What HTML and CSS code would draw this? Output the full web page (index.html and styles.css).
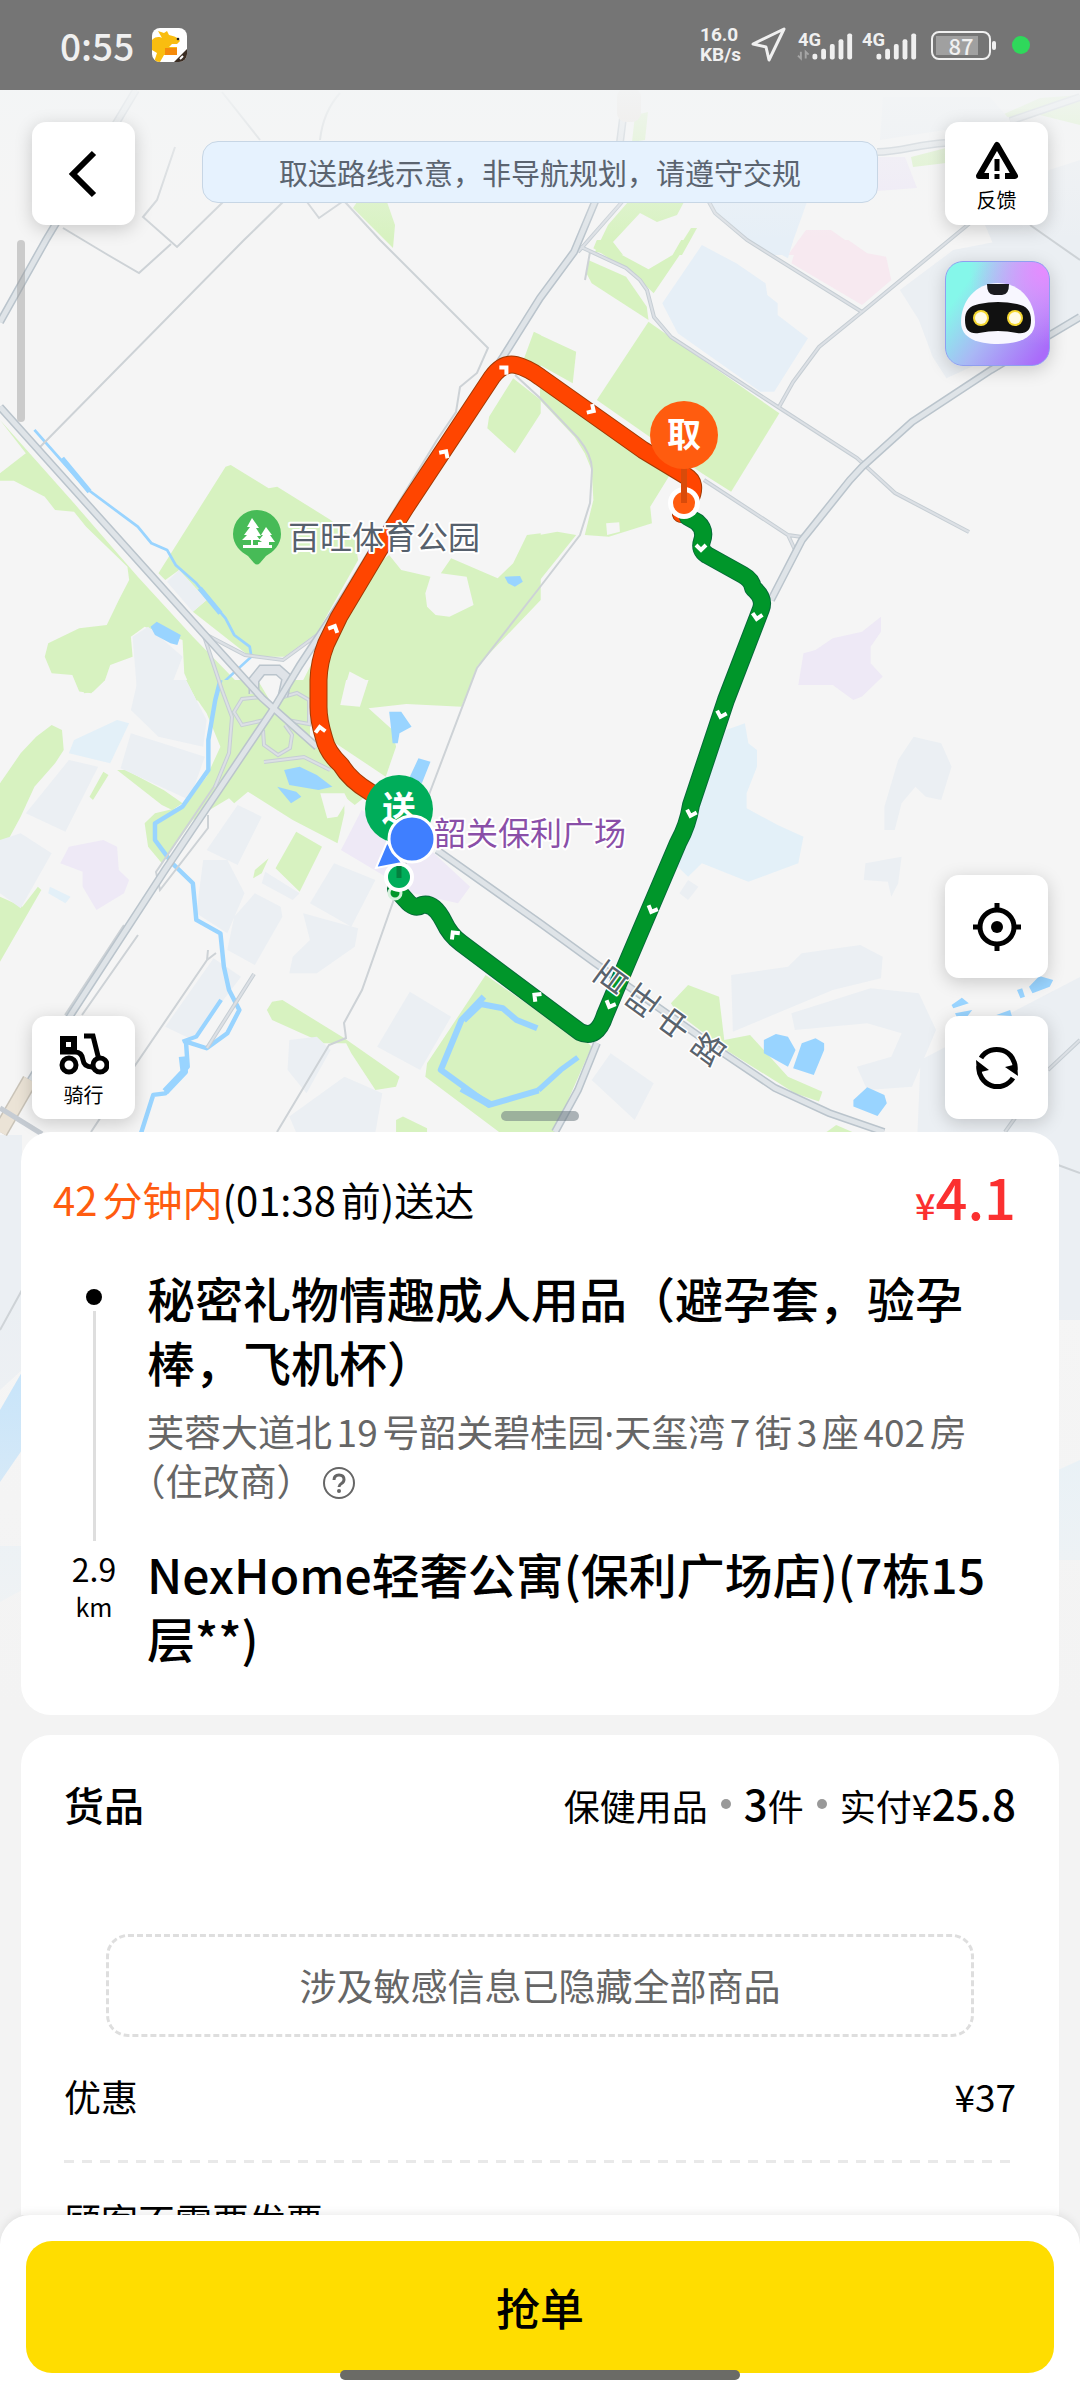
FILE: index.html
```html
<!DOCTYPE html>
<html lang="zh-CN">
<head>
<meta charset="utf-8">
<meta name="viewport" content="width=device-width, initial-scale=1">
<title>订单详情</title>
<link rel="stylesheet" href="styles.css">
</head>
<body>
<header class="status">
  <div class="status-side">
    <span class="clock">0:55</span>
    <svg class="app-badge" viewBox="0 0 35 34" aria-hidden="true">
      <defs><clipPath id="badge"><rect width="35" height="34" rx="8"/></clipPath></defs>
      <g clip-path="url(#badge)">
        <rect width="35" height="34" fill="#fff"/>
        <path d="M0 12C4 8 8 9 10 10L6 3L12 5L15 3L17 7C22 8 27 10 28 13L25 16L20 16L17 19H25V27H12L8 34H2L5 25L0 22Z" fill="#f9bd10"/>
        <rect x="13" y="20" width="12" height="7" fill="#f58a0b"/>
        <path d="M22 34L35 21V34Z" fill="#3a2c22"/>
        <circle cx="26" cy="11" r="1.3" fill="#222"/>
        <path d="M28 31L31 28" stroke="#fff" stroke-width="2"/>
      </g>
    </svg>
  </div>
  <div class="status-side status-right">
    <span class="speed"><span>16.0</span><span>KB/s</span></span>
    <svg class="nav-arrow" viewBox="0 0 36 36" aria-hidden="true"><path d="M33 2L18 33L15 20L2 17Z" fill="none" stroke="#f0f0f0" stroke-width="3" stroke-linejoin="round"/></svg>
    <svg class="signal" viewBox="0 0 60 34" aria-hidden="true">
      <text x="1" y="18">4G</text>
      <g fill="#f0f0f0"><rect x="16" y="26" width="5" height="6" rx="2"/><rect x="25" y="21" width="5" height="11" rx="2"/><rect x="34" y="16" width="5" height="16" rx="2"/><rect x="43" y="11" width="5" height="21" rx="2"/><rect x="52" y="5" width="5" height="27" rx="2"/></g>
      <path d="M4 24V31L1 28M9 31V24L12 27" fill="none" stroke="#a5a5a5" stroke-width="2"/>
    </svg>
    <svg class="signal" viewBox="0 0 60 34" aria-hidden="true">
      <text x="1" y="18">4G</text>
      <g fill="#f0f0f0"><rect x="16" y="26" width="5" height="6" rx="2"/><rect x="25" y="21" width="5" height="11" rx="2"/><rect x="34" y="16" width="5" height="16" rx="2"/><rect x="43" y="11" width="5" height="21" rx="2"/><rect x="52" y="5" width="5" height="27" rx="2"/></g>
    </svg>
    <span class="battery"><span class="battery-level">87</span></span>
    <span class="live-dot"></span>
  </div>
</header>

<main class="content">
  <svg class="map" viewBox="0 90 1080 1620" aria-hidden="true">
    <defs>
      <linearGradient id="topFade" x1="0" y1="0" x2="0" y2="1"><stop offset="0" stop-color="#f3f5f6" stop-opacity=".9"/><stop offset="1" stop-color="#f5f5f5" stop-opacity="0"/></linearGradient>
      <linearGradient id="endFade" x1="0" y1="0" x2="0" y2="1"><stop offset="0" stop-color="#f3f3f3" stop-opacity="0"/><stop offset="1" stop-color="#f3f3f3"/></linearGradient>
      <path id="chev" d="M-5 3L0 -2L5 3" fill="none" stroke="#fff" stroke-width="4"/>
      <g id="main-roads">
        <path d="M136 90L46 240 0 322"/>
        <path d="M0 407L203 633 262 698 317 747"/>
        <path d="M437 850L540 923 595 963 726 1055 775 1088 829 1113 884 1132"/>
        <path d="M623 118L620 142 574 252 540 298 503 357 300 665 274 708 165 870 72 1013 0 1130"/>
        <path d="M1080 317L991 370 912 422 862 467 850 480 802 540 771 600"/>
        <path d="M597 1043L578 1090 555 1132"/>
        <path d="M877 152C900 152 920 144 945 143M1010 121L1080 97"/>
      </g>
      <g id="side-roads">
        <path d="M581 247L626 268 640 280 647 290 654 317 671 337 778 407 857 458 895 493 969 532"/>
        <path d="M709 202L715 213 747 240 862 312 970 223M862 312L819 347 793 382 779 407"/>
        <path d="M704 480L788 535 795 550M788 535L802 537"/>
        <path d="M203 633L245 655 283 660 320 633"/>
        <path d="M203 633L222 690 232 717 229 753 215 787"/>
        <path d="M262 697L242 699 234 712 242 725 265 720M283 697L297 693 309 700 309 724 287 720"/>
        <path d="M263 730L264 745 278 755 290 748 292 735 285 725M264 762L304 757 330 770"/>
        <path d="M254 974L207 1048M1048 1070L1080 1040M1005 1132L1015 1118M578 252L622 202"/>
      </g>
    </defs>
    <rect y="90" width="1080" height="1620" fill="#f5f5f5"/>

    <!-- land use, north -->
    <g class="green">
      <path d="M357 202H387L395 225 393 248 353 208Z"/>
      <path d="M595 252L608 225 628 202H684L677 215 657 222 640 213 613 242 623 255Z"/>
      <path d="M691 228H697L682 255H674Z"/>
      <path d="M911 157L946 148V163L913 167ZM995 118L1040 98 1080 95V125L1040 115ZM635 115L648 112 645 140 632 142Z"/>
    </g>
    <path class="blue" d="M707 202H807L788 255H770L715 216Z"/>
    <path class="pink" d="M806 230H831L866 255H788Z"/>
    <path class="purple" d="M877 157H905L917 188 877 191Z"/>
    <path class="grey" d="M883 97H990L1010 120 880 140ZM1049 170L1080 160V260H1000L985 225Z"/>

    <g transform="translate(0 240) scale(.3444 .3333)">
      <g class="green">
        <path d="M460 1000L655 680 670 675 780 745 805 740 960 840 1030 900 1040 960 920 1180 820 1255 720 1245 560 1115 600 1080 520 990 480 1020Z"/>
        <path d="M1130 945L1165 990 1250 1010 1235 1060 1240 1100 1265 1125 1305 1130 1375 1095 1355 1010 1280 1000 1310 955 1445 1015 1490 970 1530 885 1570 880V1080L1385 1280 1350 1382H850L950 1180 1110 960Z"/>
        <path d="M0 540L75 640 0 700V722H40L130 770 160 810 215 815 250 860 370 980 375 1020 345 1080 310 1155 230 1165 140 1210 130 1250 150 1300 210 1305 230 1355 265 1360 305 1320 320 1275 385 1250 380 1190 420 1160 530 1200 535 1300 570 1382H740L560 1190 400 1010 215 790Z"/>
        <path d="M1550 275L1570 285V380L1520 360ZM1490 415L1570 480V520L1495 640 1415 565 1420 530Z"/>
      </g>
      <path class="grey" d="M385 1190L430 1160 530 1250 500 1330 530 1382H400ZM485 1025L520 990 600 1080 560 1115Z"/>
      <path fill="#f5f5f5" d="M1015 1295L1070 1325 1045 1382H990ZM640 1210L720 1250H830L920 1190 830 1370H740Z"/>
      <path class="water" d="M437 1160L455 1145 525 1185 515 1215 495 1210 450 1185ZM1465 1010L1510 1008 1518 1025 1495 1040 1475 1030Z"/>
      <path class="river" stroke-width="8" d="M100 570L250 745 400 860 440 910 485 930 510 975 570 1030 655 1135 680 1185 725 1220 730 1250 635 1340 625 1382"/>
      <path class="river" stroke-width="15" d="M180 655L260 755M580 1045L640 1120"/>
    </g>

    <g transform="translate(540 240) scale(.3444 .3333)">
      <g class="green">
        <path d="M0 285L105 335 95 430 0 375Z"/>
        <path d="M315 245L695 520 555 755 470 700 165 480Z"/>
        <path d="M135 100L140 60 250 110 310 200 315 240 150 130Z"/>
        <path d="M165 0H205L220 35 315 88 385 45 410 0H435L330 160 270 100 155 25Z"/>
        <path d="M0 480L100 590 130 640 150 690 155 780 130 885 200 890 325 850 320 800 380 700 100 500 0 440Z"/>
        <path d="M-2 885L50 875 105 885 0 1020Z"/>
      </g>
      <path fill="#f5f5f5" d="M192 850L230 847 232 875 195 885Z"/>
      <path class="blue" d="M470 15L570 70 655 130 660 165 690 190V225L778 295 680 455H640L400 280 355 190ZM625 0H735L720 55Z"/>
      <path class="pink" d="M750 0H895L950 40 1005 50 1020 120 935 195 730 70Z"/>
      <path class="grey" d="M1045 150L1200 30 1350 0H1570V230L1180 415 1140 350 1100 240Z"/>
      <path class="purple" d="M750 1335L765 1240 800 1230 850 1195 935 1175 990 1130V1175L960 1220V1270L995 1310 935 1370 910 1380 850 1335Z"/>
    </g>

    <g transform="translate(0 680) scale(.3444 .3333)">
      <g class="green">
        <path d="M220 0H305L270 35 245 40ZM105 170L150 135 180 150 185 210 160 250 100 320 60 410 0 525V310L60 220Z"/>
        <path d="M540 0H900V170L960 260 1060 350 1030 375 1000 350V400L980 490 850 420 720 335 680 370 665 355 560 420 470 550 430 500 420 430 450 400 530 380 600 290 640 200 620 150 600 100 560 40Z"/>
        <path d="M940 0H1370L1340 80 1180 72 1070 85 1140 150 1150 200 1120 290 960 180Z"/>
        <path d="M340 270H365L475 330 530 370 500 390 470 375ZM300 275L315 285 270 360 260 350Z"/>
        <path d="M0 650L65 680 110 620 120 630 0 845ZM860 455L935 500 870 635 800 565ZM780 535L760 580 735 595 740 570Z"/>
        <path d="M775 990L790 965 820 960 1000 1075 1160 1190 1150 1220 1090 1230 1020 1120 1005 1090 940 1090 790 1020Z"/>
        <path d="M1150 1320L1170 1310 1240 1345V1358H1150ZM1410 885L1570 1000V1380H1480L1235 1190 1240 1150Z"/>
      </g>
      <path fill="#f5f5f5" d="M1005 0H1070L1045 80 988 75ZM930 340L1000 340 1010 360 980 410 950 415ZM745 -5H830L800 90Z"/>
      <path class="grey" d="M200 240L285 260 190 455 75 400ZM380 160L595 230 550 360 350 265ZM400 0H540L600 120 590 200 460 170 380 90ZM60 460L150 520 60 685 0 640V480ZM690 375L760 410 690 555 600 510ZM590 540L660 540 710 640 660 760 570 700ZM740 640L815 680 820 710 740 855 660 810 680 710ZM970 550L1090 600 1020 740 900 670ZM770 575L870 640 850 660 760 610ZM880 700L1040 745 1030 800 920 880H840L850 830 900 780ZM1190 935L1310 1010 1220 1170 1095 1100ZM620 835L700 890 560 1080 480 1040ZM840 1080L920 1070 960 1110 890 1240 835 1170ZM1000 1190L1110 1240 1090 1358H860L840 1310Z"/>
      <path class="purple" d="M200 500L300 480 340 500 345 570 375 600 360 640 280 690 240 620 240 575 175 550ZM1050 390L1250 510 1365 620 1330 670 1200 640 990 510Z"/>
      <path class="pool" d="M340 120L375 130 320 250 200 220 215 180ZM145 620L205 650 190 670 140 640Z"/>
      <path class="water" d="M825 270L870 260 920 285 965 320 925 330 840 315ZM805 320L860 335 875 350 845 370ZM1130 95H1165L1195 140 1160 160 1155 190H1140L1135 140ZM1215 235L1250 245 1225 310 1190 290Z"/>
      <path class="river" stroke-width="13" d="M640 0L625 60 605 180V270L530 380 450 430V480L500 550 560 610 570 720 640 760 650 860 665 930 695 990 660 1060 600 1105 540 1085 545 1160 480 1240 445 1245 410 1358"/>
      <path class="river" stroke-width="12" d="M530 1085L570 1070 642 960"/>
      <path class="river" stroke-width="18" d="M1405 950L1340 1020 1280 1170 1420 1275 1570 1230M1385 970L1460 985 1500 1020 1560 1045"/>
      <path class="river" stroke-width="22" d="M1395 970L1345 1020M1340 1225L1425 1275M530 1130L535 1175 480 1235"/>
    </g>

    <g transform="translate(540 680) scale(.3444 .3333)">
      <path class="green" d="M-2 935L150 1100 40 1358H-2ZM380 970L430 915 520 950 535 1080 610 1065 720 1190 820 1235 810 1265 740 1240 540 1110 400 1000ZM830 1358L860 1335 910 1358Z"/>
      <path class="river" stroke-width="16" d="M-4 1230L60 1170 110 1132"/>
      <path class="pool" d="M595 130L605 190 630 210V260L600 340V385L690 435 765 470 750 550 605 605 470 550 430 590 400 560 540 150Z"/>
      <path class="grey" d="M1085 170L1165 190 1195 260 1165 360 1120 350 1090 320 1050 370 1030 450H1000V380L1040 240ZM945 550L1050 530 1040 610 1020 650 1010 605 940 600ZM555 885L720 860 760 820 930 795 995 830 990 895 850 930 560 1055ZM730 1000L960 925 1100 940 1150 1050 1080 1220 950 1230 920 1160 1020 1130 1050 1060 950 1030 740 1050ZM205 1120L330 1210 275 1320 150 1200ZM1105 1140L1570 890V1500H1090ZM430 600L460 620 430 660 405 640Z"/>
      <path class="water" d="M650 1080L685 1062 720 1070 742 1110 720 1160 650 1120ZM760 1090L800 1075 825 1090V1110L795 1185 735 1165ZM910 1260L950 1222 1000 1245 1007 1270 980 1308 910 1280ZM1195 975L1225 953 1245 970 1200 985ZM1205 1000L1255 990 1240 1010H1210ZM1385 930L1400 925 1408 950 1395 955ZM1420 920L1450 888 1490 900 1480 920 1430 940ZM1325 1005L1365 990 1370 1008Z"/>
    </g>
    <path class="grey" d="M0 1135H22V1370L0 1390ZM1058 1132H1080V1320H1058Z"/>
    <path class="water" opacity=".6" d="M0 1410L22 1372V1450L0 1482Z"/>
    <path class="pool" d="M0 1546H22V1590L0 1602ZM1058 1470L1080 1460V1560H1058Z"/>

    <!-- roads -->
    <g class="lane">
      <path d="M283 202L244 240 40 447M345 202L380 240 488 348 477 373 460 387 456 412 437 440 386 523 320 630"/>
      <path d="M63 228L108 255 139 273 171 244M175 147L157 200 143 217 177 247 223 202M307 202L319 218 342 202M222 92L260 140M340 93Q323 112 320 140"/>
      <path d="M515 375L540 398 578 438Q592 455 592 470L590 503 580 535 540 587 477 668 430 792 393 902 362 990 344 1023 346 1038 329 1045 277 1132"/>
      <path d="M208 815V828L160 890 156 872 215 785M124 925L65 1015M138 935L82 1015M208 950L207 960 134 1067 91 1132M207 960L216 953"/>
      <path d="M1058 1165L1080 1173M1030 225L1080 260M0 1330L22 1290M585 280L590 252"/>
    </g>
    <use href="#side-roads" class="road-edge side"/>
    <use href="#side-roads" class="road-fill side"/>
    <path class="loop-edge" d="M254 694V680L262 670H278L287 678 283 696"/>
    <path class="loop-fill" d="M254 694V680L262 670H278L287 678 283 696"/>
    <use href="#main-roads" class="road-edge"/>
    <use href="#main-roads" class="road-fill"/>
    <path d="M30 1080L0 1132" stroke="#c9c3b8" stroke-width="16"/><path d="M30 1080L0 1132" stroke="#ebe3d6" stroke-width="13"/>
    <path d="M0 1108L42 1134" stroke="#c6ccd3" stroke-width="5"/>
    <rect x="617" y="88" width="24" height="34" rx="9" fill="#e9e2dc"/>

    <rect y="90" width="1080" height="150" fill="url(#topFade)"/>
    <rect y="1300" width="1080" height="410" fill="url(#endFade)"/>

    <!-- delivery routes -->
    <g fill="none" stroke-linecap="round" stroke-linejoin="round">
      <path stroke="#a03a04" stroke-width="18" d="M400 812L370 792Q350 780 341 765 327 752 324 738 318.500 720 318.500 707V680Q319 662 326 644L339 617 379 550 406 507 492 377Q503 362 516 365 528 368 540 377L643 450 686 476Q698 483 690 500L681 514"/>
      <path stroke="#ff4500" stroke-width="16" d="M400 812L370 792Q350 780 341 765 327 752 324 738 318.500 720 318.500 707V680Q319 662 326 644L339 617 379 550 406 507 492 377Q503 362 516 365 528 368 540 377L643 450 686 476Q698 483 690 500L681 514"/>
      <path stroke="#056a38" stroke-width="18" d="M688 517L697 522Q706 530 702 541 699 550 707 555L743 575Q752 580 753 588 765 598 761 609L726 700 691 805Q688 825 678 843L626 965 605 1015Q597 1040 580 1032L461 943Q450 935 444 922 434 902 422 905 414 910 406 900L396 889"/>
      <path stroke="#00962a" stroke-width="16" d="M688 517L697 522Q706 530 702 541 699 550 707 555L743 575Q752 580 753 588 765 598 761 609L726 700 691 805Q688 825 678 843L626 965 605 1015Q597 1040 580 1032L461 943Q450 935 444 922 434 902 422 905 414 910 406 900L396 889"/>
    </g>
    <use href="#chev" transform="translate(505 369) rotate(45)"/>
    <use href="#chev" transform="translate(445 453) rotate(33)"/>
    <use href="#chev" transform="translate(334 628) rotate(25)"/>
    <use href="#chev" transform="translate(320 729) rotate(-8)"/>
    <use href="#chev" transform="translate(592 410) rotate(122)"/>
    <use href="#chev" transform="translate(701 548) rotate(180)"/>
    <use href="#chev" transform="translate(757 617) rotate(190)"/>
    <use href="#chev" transform="translate(721 715) rotate(197)"/>
    <use href="#chev" transform="translate(691 814) rotate(197)"/>
    <use href="#chev" transform="translate(652 910) rotate(203)"/>
    <use href="#chev" transform="translate(610 1005) rotate(203)"/>
    <use href="#chev" transform="translate(536 996) rotate(-52)"/>
    <use href="#chev" transform="translate(454 934) rotate(-38)"/>

    <!-- places -->
    <path d="M257 510a24 24 0 0 1 24 24c0 11-8 18-15 22l-6 7q-3 3-6 0l-6-7c-7-4-15-11-15-22a24 24 0 0 1 24-24Z" fill="#47bb57"/>
    <path d="M252 518l7 10h-3l5 8h-4l3 4h-7v5h5v-3h4l-3-2 4-5h-2l5-8 6 8h-2l5 7h-6v3h3v3h-29v-3h8v-5h-9l5-5h-3l6-8h-3Z" fill="#fff"/>
    <text class="place" x="288" y="549" fill="#56606c">百旺体育公园</text>
    <text class="place" x="434" y="845" fill="#8a4fa8">韶关保利广场</text>
    <g transform="translate(611 978) rotate(-54)"><text class="place street" x="0 0 0 0" y="12 51 90 132" fill="#59636d">百旺中路</text></g>

    <circle cx="684" cy="503" r="16" fill="#fff"/><circle cx="684" cy="503" r="11" fill="#ff5c0f"/>
    <path d="M684 465V503" stroke="#d94b0a" stroke-width="6"/>
    <circle cx="684" cy="435" r="34" fill="#ff5c0f"/>
    <text class="pin-text" x="684" y="447">取</text>
    <circle cx="395" cy="893" r="6" fill="none" stroke="#d4f0dc" stroke-width="3"/>
    <circle cx="399" cy="877" r="15" fill="#fff"/><circle cx="399" cy="877" r="11" fill="#00ad5a"/>
    <path d="M399 866V878" stroke="#04803f" stroke-width="5"/>
    <circle cx="399" cy="809" r="34" fill="#00ad5a"/>
    <text class="pin-text" x="399" y="821">送</text>
    <path d="M376 868L387 842 402 863Z" fill="#3f7fff" stroke="#fff" stroke-width="2"/>
    <circle cx="412" cy="839" r="23" fill="#3f7fff" stroke="#fff" stroke-width="3"/>
    <rect x="17" y="240" width="8" height="182" rx="4" fill="#999" fill-opacity=".45"/>
    <rect x="501" y="1111" width="78" height="10" rx="5" fill="#627078" fill-opacity=".5"/>
  </svg>

  <section class="map-controls" aria-label="地图">
    <div class="control-column">
      <button class="tile" aria-label="返回"><svg width="34" height="50" viewBox="0 0 34 50" aria-hidden="true"><path d="M27 4L6 25L27 46" fill="none" stroke="#000" stroke-width="6"/></svg></button>
      <button class="tile labelled"><svg width="50" height="42" viewBox="0 0 50 42" aria-hidden="true"><path d="M4 6H15V17H4Z" fill="none" stroke="#000" stroke-width="6"/><circle cx="10" cy="32" r="7" fill="none" stroke="#000" stroke-width="5"/><circle cx="41" cy="32" r="7" fill="none" stroke="#000" stroke-width="5"/><path d="M1 19H16Q23 19 24 27Q25 34 33 34M25 3H34L40 27" fill="none" stroke="#000" stroke-width="5"/></svg><span>骑行</span></button>
    </div>
    <p class="notice">取送路线示意，非导航规划，请遵守交规</p>
    <div class="control-column">
      <button class="tile labelled"><svg width="46" height="40" viewBox="0 0 46 40" aria-hidden="true"><path d="M15 36H5L23 5L41 36H31" fill="none" stroke="#000" stroke-width="6" stroke-linejoin="round"/><path d="M23 19V31M23 34V39" stroke="#000" stroke-width="5"/></svg><span>反馈</span></button>
      <button class="tile robot" aria-label="智能助手"><svg width="78" height="64" viewBox="0 0 78 64" aria-hidden="true"><path d="M39 1C62 1 76 20 76 40C76 56 60 62 39 62S2 56 2 40C2 20 16 1 39 1Z" fill="#f8f7ff"/><path d="M28 2H50Q50 13 43 13H35Q28 13 28 2Z" fill="#1b1b1f"/><path d="M20 22Q39 18 58 22C68 24 72 29 72 38C72 49 67 52 58 51Q39 47 20 51C11 52 6 49 6 38C6 29 10 24 20 22Z" fill="#111"/><circle cx="22" cy="36" r="8" fill="#f6d832"/><circle cx="22" cy="36" r="6" fill="#fffbe6"/><circle cx="56" cy="36" r="8" fill="#f6d832"/><circle cx="56" cy="36" r="6" fill="#fffbe6"/></svg></button>
      <button class="tile locate" aria-label="定位"><svg width="48" height="48" viewBox="0 0 48 48" aria-hidden="true"><circle cx="24" cy="24" r="17" fill="none" stroke="#000" stroke-width="5"/><circle cx="24" cy="24" r="6" fill="#000"/><path d="M24 0V8M24 40V48M0 24H8M40 24H48" stroke="#000" stroke-width="5"/></svg></button>
      <button class="tile" aria-label="刷新"><svg width="44" height="44" viewBox="0 0 44 44" aria-hidden="true"><path d="M6 12A18.500 18.500 0 0 1 40 24M38 32A18.500 18.500 0 0 1 4 20" fill="none" stroke="#000" stroke-width="5"/><path d="M43 30L30 21 42 18ZM1 14L14 24 2 27Z" fill="#000"/></svg></button>
    </div>
  </section>

  <section class="card route-card">
    <div class="summary">
      <h1 class="deadline"><em>42分钟内</em>(01:38前)送达</h1>
      <strong class="price"><small>¥</small>4.1</strong>
    </div>
    <div class="stops">
      <div class="rail"><span class="rail-dot"></span><span class="rail-line"></span></div>
      <div class="stop">
        <h2>秘密礼物情趣成人用品（避孕套，验孕棒，飞机杯）</h2>
        <p>芙蓉大道北19号韶关碧桂园<span class="middot">·</span>天玺湾7街3座402房（住改商）<button class="help" aria-label="地址说明"><svg width="34" height="34" viewBox="0 0 34 34" aria-hidden="true"><circle cx="17" cy="17" r="15" fill="none" stroke="#666" stroke-width="2"/><path d="M12 14Q12 9 17 9T22 13.500Q22 16 19.500 17.500T17 21" fill="none" stroke="#666" stroke-width="3"/><circle cx="17" cy="25" r="2" fill="#666"/></svg></button></p>
      </div>
      <div class="distance">2.9<small>km</small></div>
      <div class="stop">
        <h2>NexHome轻奢公寓(保利广场店)(7栋15层**)</h2>
      </div>
    </div>
  </section>

  <section class="card goods-card">
    <div class="row">
      <h3>货品</h3>
      <p class="totals">保健用品<i></i><b>3</b>件<i></i>实付¥<b>25.8</b></p>
    </div>
    <p class="hidden-goods">涉及敏感信息已隐藏全部商品</p>
    <div class="row discount"><span>优惠</span><span>¥37</span></div>
    <svg class="divider" width="100%" height="3" aria-hidden="true"><path d="M0 1.500H2000" stroke="#e9e9e9" stroke-width="3" stroke-dasharray="10 8"/></svg>
    <p class="invoice">顾客不需要发票</p>
  </section>
</main>

<footer class="action-bar">
  <button class="grab">抢单</button>
  <span class="home-bar"></span>
</footer>
</body>
</html>
```
FILE: styles.css
```css
* { box-sizing: border-box; }
html, body { height: 100%; }
body {
  margin: 0;
  display: flex;
  flex-direction: column;
  background: #f3f3f3;
  color: #000;
  font-family: "Noto Sans CJK SC", "Noto Sans", sans-serif;
}
h1, h2, h3, p { margin: 0; font-weight: 400; }
button { border: 0; padding: 0; font: inherit; color: inherit; cursor: pointer; }
svg { display: block; }

/* Status bar */
.status {
  flex: none;
  height: 90px;
  padding: 0 50px 0 60px;
  display: flex;
  justify-content: space-between;
  align-items: center;
  background: #757575;
  color: #f0f0f0;
}
.status-side { display: flex; align-items: center; gap: 18px; }
.status-right { gap: 6px; }
.clock { font: 500 37px/48px "Noto Sans CJK SC", sans-serif; }
.app-badge { width: 35px; height: 34px; }
.speed { display: flex; flex-direction: column; font: 700 19px/20px Roboto, sans-serif; white-space: nowrap; }
.nav-arrow { width: 36px; height: 36px; margin: 0 4px; }
.signal { width: 58px; height: 34px; overflow: visible; }
.signal text { font: 700 19px Roboto, sans-serif; fill: #f0f0f0; }
.battery {
  position: relative;
  width: 60px;
  height: 29px;
  margin: 0 15px 0 6px;
  padding: 3px;
  border: 2px solid #f0f0f0;
  border-radius: 8px;
}
.battery::after {
  content: "";
  position: absolute;
  right: -7px;
  top: 8px;
  width: 4px;
  height: 9px;
  border-radius: 2px;
  background: #f0f0f0;
}
.battery-level {
  display: block;
  background: linear-gradient(90deg, #a0a0a0 84%, transparent 84%);
  font-size: 22px;
  font-weight: 500;
  line-height: 19px;
  text-align: center;
}
.live-dot { width: 18px; height: 18px; border-radius: 50%; background: #2fd85b; }

.content { position: relative; flex: 1; min-height: 0; overflow: hidden; }
.map { position: absolute; top: 0; left: 0; width: 100%; height: auto; }
.green { fill: #d7f2c0; }
.water { fill: #99d4ff; }
.pool { fill: #e3f0f8; }
.grey { fill: #ebeff3; }
.blue { fill: #e6eff7; }
.pink { fill: #f7e9f0; }
.purple { fill: #eee9f6; }
.river { fill: none; stroke: #99d4ff; stroke-linejoin: round; }
.lane { fill: none; stroke: #cdd2d6; stroke-width: 2; }
.road-edge { fill: none; stroke: #bac4cc; stroke-width: 8; }
.road-fill { fill: none; stroke: #dfe4e8; stroke-width: 5; }
.road-edge.side { stroke: #c6ced4; stroke-width: 4; }
.road-fill.side { stroke: #dce0e5; stroke-width: 2; }
.loop-edge { fill: none; stroke: #bac4cc; stroke-width: 11; }
.loop-fill { fill: none; stroke: #dfe3e8; stroke-width: 8; }
.place { font-size: 32px; paint-order: stroke; stroke: #fff; stroke-width: 4px; stroke-linejoin: round; }
.street { text-anchor: middle; stroke-width: 3px; }
.pin-text { font-size: 34px; font-weight: 700; text-anchor: middle; fill: #fff; }

.map-controls {
  position: relative;
  min-height: 1042px;
  padding: 32px 31px 13px 32px;
  display: flex;
  justify-content: space-between;
}
.control-column { display: flex; flex-direction: column; justify-content: space-between; }
.tile {
  display: flex;
  flex-direction: column;
  align-items: center;
  justify-content: center;
  width: 103px;
  height: 103px;
  border-radius: 14px;
  background: #fff;
  box-shadow: 0 4px 18px rgb(0 0 0 / 18%);
  font-size: 20px;
  line-height: 28px;
}
.tile.labelled { gap: 6px; padding-top: 6px; }
.tile.robot {
  width: 105px;
  height: 105px;
  margin: 36px -1px auto 0;
  border: 1px solid #8f9ff0;
  border-radius: 18px;
  background: radial-gradient(circle at 95% 8%, #e58cff, transparent 55%), linear-gradient(125deg, #85f7ea 20%, #a9b8f5 52%, #aa6bfa 92%);
}
.tile.locate { margin-bottom: 38px; }
.notice {
  align-self: flex-start;
  width: 676px;
  margin-top: 19px;
  border: 1px solid #c7d6e5;
  border-radius: 16px;
  background: #e6f2fe;
  color: #5b6470;
  font-size: 29px;
  line-height: 60px;
  text-align: center;
}

/* Cards */
.card { position: relative; margin: 0 21px 20px; border-radius: 30px; background: #fff; }
.route-card { padding: 37px 43px 46px 32px; }
.summary { display: flex; justify-content: space-between; align-items: center; margin-bottom: 36px; line-height: 60px; }
.deadline { font-size: 40px; text-autospace: normal; }
.deadline em { font-style: normal; color: #ff5c0f; }
.price { height: 60px; margin-top: -6px; font-size: 56px; font-weight: 500; color: #fb3030; }
.price small { font-size: 36px; line-height: 1; }
.stops { display: grid; grid-template-columns: 82px 1fr; column-gap: 12px; row-gap: 36px; }
.rail { display: flex; flex-direction: column; align-items: center; gap: 6px; padding-top: 24px; }
.rail-dot { width: 16px; height: 16px; border-radius: 50%; background: #000; }
.rail-line { width: 3px; flex: 1; margin-bottom: -36px; background: #dedede; }
.stop { max-width: 840px; }
.stop h2 { font-size: 48px; font-weight: 500; line-height: 64px; }
.stop p { margin-top: 14px; color: #666; font-size: 37px; line-height: 49px; text-autospace: normal; text-spacing-trim: trim-start; }
.middot { font-family: "Noto Sans", sans-serif; line-height: 1; }
.help { width: 34px; height: 34px; margin-left: 8px; background: none; vertical-align: -4px; }
.distance { padding-top: 8px; font-size: 32px; line-height: 38px; text-align: center; }
.distance small { display: block; font-size: 25px; }

.goods-card { padding: 39px 43px; font-size: 37px; }
.row { display: flex; justify-content: space-between; align-items: center; height: 60px; line-height: 60px; }
.row h3 { font-size: 40px; font-weight: 500; }
.totals { display: flex; align-items: baseline; font-size: 36px; }
.totals b { font-size: 42px; font-weight: 500; }
.totals i { align-self: center; width: 10px; height: 10px; margin: 0 13px; border-radius: 50%; background: #999; }
.hidden-goods {
  margin: 100px 42px 0;
  border: 3px dashed #dedede;
  border-radius: 22px;
  color: #666;
  line-height: 97px;
  text-align: center;
}
.discount { margin-top: 29px; }
.divider { margin-top: 34px; }
.invoice { margin-top: 33px; line-height: 48px; }

/* Bottom action */
.action-bar {
  position: relative;
  flex: none;
  padding: 26px 26px 27px;
  border-radius: 30px 30px 0 0;
  background: #fff;
  box-shadow: 0 -2px 8px rgb(0 0 0 / 8%);
}
.grab {
  display: block;
  width: 100%;
  border-radius: 26px;
  background: #ffdd00;
  font-size: 44px;
  font-weight: 500;
  line-height: 132px;
}
.home-bar {
  position: absolute;
  bottom: 20px;
  left: 50%;
  width: 400px;
  height: 10px;
  margin-left: -200px;
  border-radius: 5px;
  background: #6b6b66;
}
```
